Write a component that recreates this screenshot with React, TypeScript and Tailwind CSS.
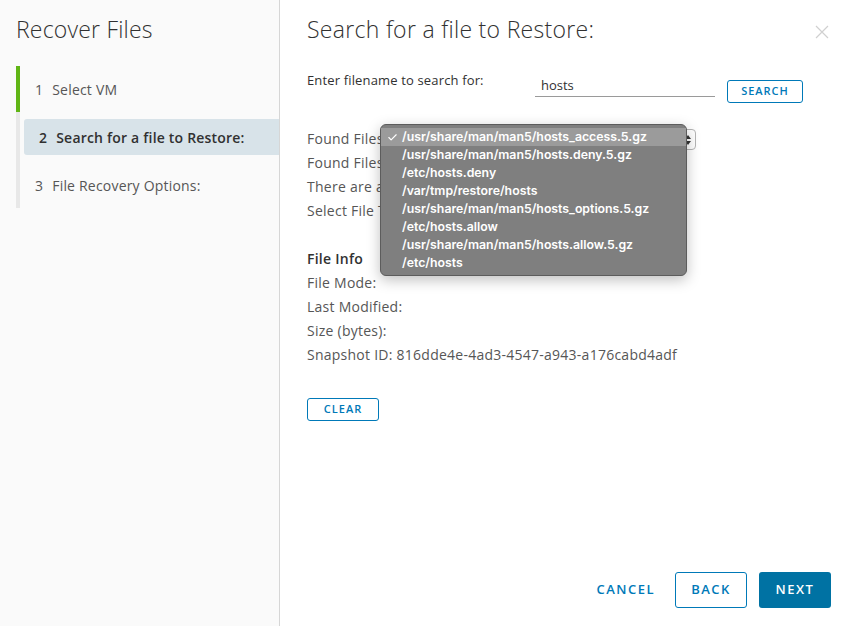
import { Check } from 'lucide-react';

const files = [
  '/usr/share/man/man5/hosts_access.5.gz',
  '/usr/share/man/man5/hosts.deny.5.gz',
  '/etc/hosts.deny',
  '/var/tmp/restore/hosts',
  '/usr/share/man/man5/hosts_options.5.gz',
  '/etc/hosts.allow',
  '/usr/share/man/man5/hosts.allow.5.gz',
  '/etc/hosts',
];

const steps = [
  { n: 1, label: 'Select VM', state: 'done' },
  { n: 2, label: 'Search for a file to Restore:', state: 'current' },
  { n: 3, label: 'File Recovery Options:', state: 'todo' },
];

export default function App() {
  return (
    <div className="flex h-[626px] w-[847px] bg-white text-[#565656] font-['Open_Sans',sans-serif] overflow-hidden">
      <aside className="w-[280px] shrink-0 bg-[#fafafa] border-r border-[#d6d6d6]">
        <h1 className="pl-4 pt-[15px] text-[23px] font-light leading-[28px] tracking-[0.2px] text-[#313131]">Recover Files</h1>
        <ul className="ml-4 mt-[23px]">
          {steps.map(s => (
            <li
              key={s.n}
              className={`flex border-l-4 ${s.state === 'done' ? 'border-[#60b515]' : 'border-[#e8e8e8]'} ${s.n === 2 ? 'py-[7px]' : ''}`}
            >
              <div
                className={`flex flex-1 items-center gap-[9px] pl-[15px] text-[14px] tracking-[0.2px] ${
                  s.state === 'current'
                    ? 'ml-1 pl-[11px] h-[36px] rounded-l-[3px] bg-[#d8e3e9] font-semibold text-[#313131]'
                    : 'h-[46px]'
                }`}
              >
                <span>{s.n}</span>
                <span>{s.label}</span>
              </div>
            </li>
          ))}
        </ul>
      </aside>

      <main className="relative flex flex-1 flex-col pl-[27px] pr-4">
        <div className="flex items-start justify-between pt-[15px]">
          <h2 className="text-[23px] font-light leading-[28px] tracking-[0.3px] text-[#313131]">Search for a file to Restore:</h2>
          <svg width="14" height="14" viewBox="0 0 14 14" className="mt-[10px] mr-[2px]">
            <path d="M1 1L13 13M13 1L1 13" stroke="#d0d0d0" strokeWidth="1.2" />
          </svg>
        </div>

        <div className="mt-[28px] flex items-start text-[13px] text-[#313131]">
          <span className="w-[228px] leading-[18px] tracking-[0.15px]">Enter filename to search for:</span>
          <div className="mt-[5px] w-[180px] border-b border-[#9a9a9a] pl-[6px] pb-[2px] text-[13px] leading-[18px]">hosts</div>
          <button className="ml-3 mt-[9px] h-[23px] w-[76px] rounded-[3px] border border-[#0079b8] text-[11px] font-semibold tracking-[1px] text-[#0079b8]">
            SEARCH
          </button>
        </div>

        <div className="mt-[24px] flex flex-col text-[14px] leading-[24px] tracking-[0.25px] text-[#565656]">
          <div className="flex items-center">
            <span className="w-[73px] whitespace-nowrap">Found Files:</span>
            <div className="relative z-10 ml-[1px] h-[21px] w-[315px] rounded-[4px] border border-[#b5b5b5] bg-white">
              <svg width="8" height="14" viewBox="0 0 8 14" className="absolute right-[3px] top-[3px]">
                <path d="M1 6L4 2L7 6Z M1 8L4 12L7 8Z" fill="#333" />
              </svg>
            </div>
          </div>
          <span className="whitespace-nowrap">Found Files Count: 8</span>
          <span className="whitespace-nowrap">There are a total of 8 files matching</span>
          <span className="whitespace-nowrap">Select File To Restore</span>

          <span className="mt-[24px] font-semibold text-[#313131]">File Info</span>
          <span>File Mode:</span>
          <span>Last Modified:</span>
          <span>Size (bytes):</span>
          <span>Snapshot ID: 816dde4e-4ad3-4547-a943-a176cabd4adf</span>
        </div>

        <div className="mt-[28px]">
          <button className="h-[23px] w-[72px] rounded-[3px] border border-[#0079b8] text-[11px] font-semibold tracking-[1px] text-[#0079b8]">
            CLEAR
          </button>
        </div>

        <div className="mt-auto mb-[18px] flex items-center justify-end gap-3">
          <button className="h-[36px] pl-5 pr-2 text-[13px] font-semibold tracking-[1.5px] text-[#0079b8]">CANCEL</button>
          <button className="h-[36px] w-[72px] rounded-[3px] border border-[#0079b8] text-[13px] font-semibold tracking-[1.5px] text-[#0079b8]">
            BACK
          </button>
          <button className="h-[36px] w-[72px] rounded-[3px] bg-[#0072a3] text-[13px] font-semibold tracking-[1.5px] text-white">
            NEXT
          </button>
        </div>

        <div className="absolute z-20 left-[100px] top-[124px] w-[307px] rounded-[6px] border border-[#5c5c5c] bg-[#7f7f7f] py-[3px] shadow-[0_4px_14px_rgba(0,0,0,0.25)] font-['Inter',sans-serif]">
          {files.map((f, i) => (
            <div
              key={f}
              className={`flex h-[18px] items-center text-[12.3px] font-semibold text-white ${i === 0 ? 'bg-[#9b9b9b]' : ''}`}
            >
              <span className="flex w-[21px] justify-center pl-[2px]">
                {i === 0 && <Check size={11} strokeWidth={2.5} />}
              </span>
              <span className="whitespace-nowrap">{f}</span>
            </div>
          ))}
        </div>
      </main>
    </div>
  );
}
